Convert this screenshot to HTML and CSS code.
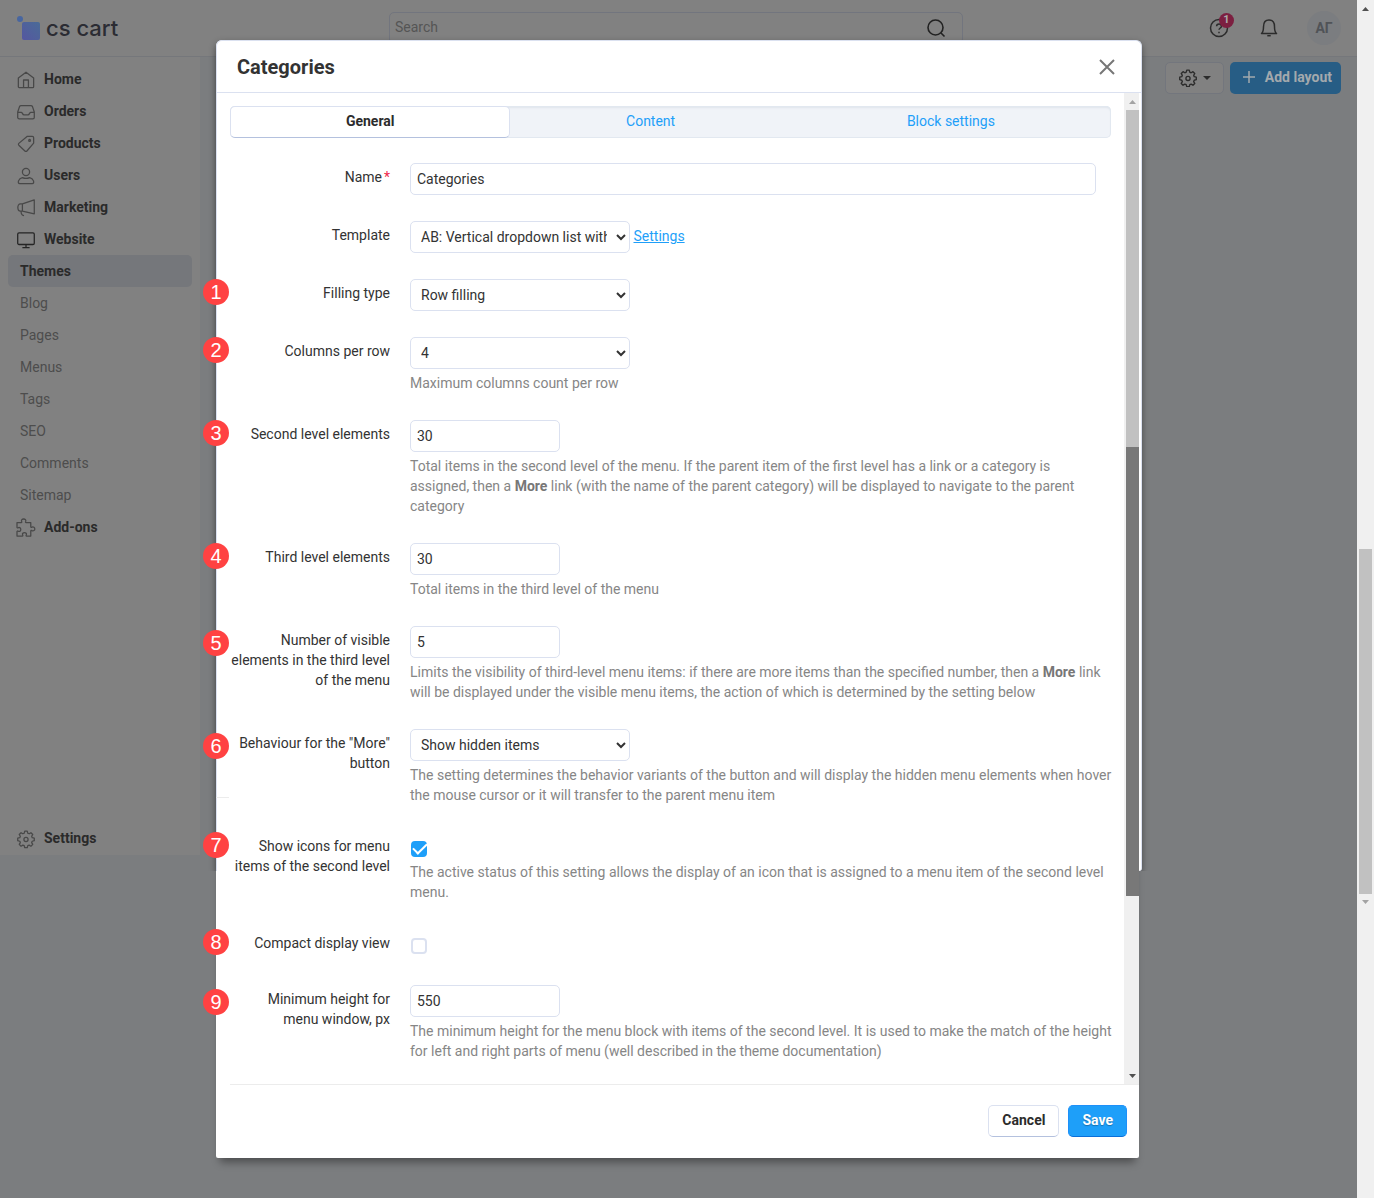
FILE: index.html
```html
<!DOCTYPE html>
<html lang="en">
<head>
    <meta charset="UTF-8">
    <meta name="viewport" content="width=device-width, initial-scale=1.0">
    <title>Categories</title>
    <link rel="stylesheet" href="styles.css">
</head>
<body>

    <div class="page">
        <header class="topbar">
            <a href="#" class="logo">
                <svg width="24" height="26" viewBox="0 0 24 26">
                    <defs>
                        <linearGradient id="logoFill" x1="1" y1="0" x2="0" y2="1">
                            <stop offset="0" stop-color="#4a6b97"/>
                            <stop offset="1" stop-color="#5557a0"/>
                        </linearGradient>
                    </defs>
                    <circle cx="3" cy="4" r="3" fill="#4866a0"/>
                    <rect x="5" y="7" width="18" height="18" rx="2" fill="url(#logoFill)"/>
                </svg>
                <span>cs cart</span>
            </a>
            <div class="search">
                <input type="text" placeholder="Search" aria-label="Search">
                <svg width="20" height="20" viewBox="0 0 20 20" fill="none" stroke="#222" stroke-width="1.6"><circle cx="9.500" cy="9.500" r="7.500"/><path d="M15 15l3.500 3.500"/></svg>
            </div>
            <div class="top-icons">
                <button class="icon-btn" aria-label="Help">
                    <svg width="20" height="20" viewBox="0 0 20 20" fill="none" stroke="#2c2c2c" stroke-width="1.500"><circle cx="10" cy="10" r="8.500"/><path d="M7.600 8.200c0-3 4.900-3 4.900 0 0 1.800-2.500 1.800-2.500 3.600M10 13.800v1.500"/></svg>
                    <span class="count">1</span>
                </button>
                <button class="icon-btn" aria-label="Notifications">
                    <svg width="20" height="20" viewBox="0 0 20 20" fill="none" stroke="#2c2c2c" stroke-width="1.500" stroke-linejoin="round"><path d="M2.500 15.500c1.700-1.300 2-3 2-6.800 0-4 2-6.700 5.500-6.700s5.500 2.700 5.500 6.700c0 3.800.3 5.500 2 6.800z"/><path d="M8.300 17.700h3.400"/></svg>
                </button>
                <button class="avatar">АГ</button>
            </div>
        </header>

        <div class="content">
            <nav class="sidebar">
                <a href="#" class="nav-item"><svg viewBox="0 0 20 20"><path d="M1.500 7.800L10 1.300l8.500 6.500v9.700a1 1 0 0 1-1 1h-15a1 1 0 0 1-1-1zM7.300 18.500V10h5.400v8.500"/></svg>Home</a>
                <a href="#" class="nav-item"><svg viewBox="0 0 20 20"><path d="M4.600 2.800h10.800c1 0 1.500.5 1.800 1.200L19.200 10v6a1.600 1.600 0 0 1-1.600 1.600H2.400A1.600 1.600 0 0 1 .8 16v-6l2-6c.3-.7.800-1.200 1.800-1.200zM.8 10.300h4c1.200 0 1.200 2.900 3 2.900h4.400c1.800 0 1.800-2.900 3-2.900h4"/></svg>Orders</a>
                <a href="#" class="nav-item"><svg viewBox="0 0 20 20"><path d="M11.500 1.500h5.500a1.500 1.500 0 0 1 1.500 1.500v6L11 17.800a1.500 1.500 0 0 1-2.200 0L2 11.300a1.500 1.500 0 0 1 0-2z"/><circle cx="14" cy="6" r="1"/></svg>Products</a>
                <a href="#" class="nav-item"><svg viewBox="0 0 20 20"><circle cx="10" cy="5.500" r="4"/><path d="M3 18.500c-3 0-1.500-6 3-6.700 2.500 1.200 5.500 1.200 8 0 4.500.7 6 6.700 3 6.700z"/></svg>Users</a>
                <a href="#" class="nav-item"><svg viewBox="0 0 20 20"><path d="M6 5.500L19.200 1v15.500L6 13.500zM6 5.500H3.800C0 5.500 0 13.500 3.800 13.500H6M4.500 13.500c0 3 .8 4.500 3.300 5M6 5.500v8"/></svg>Marketing</a>
                <a href="#" class="nav-item nav-open"><svg viewBox="0 0 20 20"><rect x=".8" y="2" width="18.400" height="13" rx="1.500"/><path d="M10 15v3M6 18.500h8"/></svg>Website</a>
                <a href="#" class="nav-sub active">Themes</a>
                <a href="#" class="nav-sub">Blog</a>
                <a href="#" class="nav-sub">Pages</a>
                <a href="#" class="nav-sub">Menus</a>
                <a href="#" class="nav-sub">Tags</a>
                <a href="#" class="nav-sub">SEO</a>
                <a href="#" class="nav-sub">Comments</a>
                <a href="#" class="nav-sub">Sitemap</a>
                <a href="#" class="nav-item"><svg viewBox="0 0 20 20"><path d="M0 4h4.700c.8 0 .8-.7.500-1.300C4.400 1 5.800 0 7.400 0s3 1 2.200 2.700C9.300 3.300 9.300 4 10.100 4h5.200v4.600c0 .8.700.9 1.300.5 1.700-.8 3.200.3 3.200 1.900s-1.500 2.700-3.200 1.900c-.6-.4-1.300-.3-1.300.5V19h-4.600c-.8 0-.7-.7-.4-1.300.8-1.500-.5-2.500-2-2.500s-2.800 1-2 2.500c.3.600.4 1.300-.4 1.300H0v-5c0-.8.700-.8 1.300-.4 1.700.8 2.900-.4 2.900-1.900S3 8.900 1.300 9.700C.7 10.100 0 10 0 9.200z"/></svg>Add-ons</a>
                <a href="#" class="nav-item nav-bottom"><svg viewBox="0 0 20 20"><use href="#gear"/></svg>Settings</a>
            </nav>
            <main class="toolbar">
                <button class="btn-gear" aria-label="Options">
                    <svg width="18" height="18" viewBox="0 0 20 20" fill="none" stroke="#2c2c2c" stroke-width="1.500" stroke-linejoin="round"><g id="gear"><path d="M8.600 1.300h2.800l.6 2.300 1.500.6 2-1.200 2 2-1.200 2 .6 1.500 2.300.6v2.800l-2.300.6-.6 1.500 1.200 2-2 2-2-1.200-1.500.6-.6 2.300H8.600L8 17.400l-1.500-.6-2 1.200-2-2 1.200-2-.6-1.500-2.300-.6V9.100l2.300-.6.6-1.500-1.200-2 2-2 2 1.200L8 3.600z"/><circle cx="10" cy="10.500" r="2.300"/></g></svg>
                    <svg width="8" height="4" viewBox="0 0 8 4"><path d="M0 0h8L4 4z" fill="#2c2c2c"/></svg>
                </button>
                <button class="btn-add">
                    <svg width="12" height="12" viewBox="0 0 12 12" stroke="#a3a9ad" stroke-width="1.500"><path d="M6 0v12M0 6h12"/></svg>
                    Add layout
                </button>
            </main>
        </div>
    </div>

    <!-- Page scrollbar -->
    <div class="scroll page-scroll">
        <svg class="arrow" viewBox="0 0 17 17"><path d="M5 11h7L8.500 7z" fill="#505050"/></svg>
        <span class="gap-before"></span>
        <span class="thumb"></span>
        <svg class="arrow" viewBox="0 0 17 17"><path d="M5 6h7l-3.500 4z" fill="#a3a3a3"/></svg>
        <span class="gap-after"></span>
    </div>

    <!-- Block settings dialog -->
    <form class="modal" role="dialog" aria-labelledby="modal-title">
        <div class="modal-header">
            <h1 id="modal-title">Categories</h1>
            <button type="button" class="close" aria-label="Close">
                <svg width="16" height="16" viewBox="0 0 16 16" stroke="#777" stroke-width="2"><path d="M1 1l14 14M15 1L1 15"/></svg>
            </button>
        </div>

        <div class="modal-main">
            <div class="modal-body">
                <nav class="tabs">
                    <a href="#" class="tab active">General</a>
                    <a href="#" class="tab">Content</a>
                    <a href="#" class="tab tab-wide">Block settings</a>
                </nav>

                <div class="row">
                    <label for="name">Name<span class="required">*</span></label>
                    <div class="control"><input type="text" id="name" class="wide" value="Categories"></div>
                </div>

                <div class="row">
                    <label for="template">Template</label>
                    <div class="control">
                        <select id="template"><option>AB: Vertical dropdown list with icons</option></select>
                        <a href="#" class="link">Settings</a>
                    </div>
                </div>

                <div class="row">
                    <span class="mark">1</span>
                    <label for="filling">Filling type</label>
                    <div class="control"><select id="filling"><option>Row filling</option></select></div>
                </div>

                <div class="row">
                    <span class="mark">2</span>
                    <label for="columns">Columns per row</label>
                    <div class="control">
                        <select id="columns"><option>4</option></select>
                        <p class="help">Maximum columns count per row</p>
                    </div>
                </div>

                <div class="row">
                    <span class="mark">3</span>
                    <label for="second">Second level elements</label>
                    <div class="control">
                        <input type="text" id="second" value="30">
                        <p class="help">Total items in the second level of the menu. If the parent item of the first level has a link or a category is assigned, then a <b>More</b> link (with the name of the parent category) will be displayed to navigate to the parent category</p>
                    </div>
                </div>

                <div class="row">
                    <span class="mark">4</span>
                    <label for="third">Third level elements</label>
                    <div class="control">
                        <input type="text" id="third" value="30">
                        <p class="help">Total items in the third level of the menu</p>
                    </div>
                </div>

                <div class="row tall">
                    <span class="mark">5</span>
                    <label for="visible">Number of visible elements in the third level of the menu</label>
                    <div class="control">
                        <input type="text" id="visible" value="5">
                        <p class="help">Limits the visibility of third-level menu items: if there are more items than the specified number, then a <b>More</b> link will be displayed under the visible menu items, the action of which is determined by the setting below</p>
                    </div>
                </div>

                <div class="row tall">
                    <span class="mark">6</span>
                    <label for="more">Behaviour for the "More" button</label>
                    <div class="control">
                        <select id="more"><option>Show hidden items</option></select>
                        <p class="help">The setting determines the behavior variants of the button and will display the hidden menu elements when hover the mouse cursor or it will transfer to the parent menu item</p>
                    </div>
                </div>

                <div class="row check-row">
                    <span class="mark">7</span>
                    <label for="icons">Show icons for menu items of the second level</label>
                    <div class="control">
                        <input type="checkbox" id="icons" checked>
                        <p class="help">The active status of this setting allows the display of an icon that is assigned to a menu item of the second level menu.</p>
                    </div>
                </div>

                <div class="row check-row">
                    <span class="mark">8</span>
                    <label for="compact">Compact display view</label>
                    <div class="control"><input type="checkbox" id="compact"></div>
                </div>

                <div class="row tall">
                    <span class="mark">9</span>
                    <label for="minheight">Minimum height for menu window, px</label>
                    <div class="control">
                        <input type="text" id="minheight" value="550">
                        <p class="help">The minimum height for the menu block with items of the second level. It is used to make the match of the height for left and right parts of menu (well described in the theme documentation)</p>
                    </div>
                </div>
            </div>

            <div class="scroll modal-scroll">
                <svg class="arrow" viewBox="0 0 17 17"><path d="M5 11h7L8.500 7z" fill="#a3a3a3"/></svg>
                <span class="thumb"></span>
                <span class="thumb thumb-dark"></span>
                <span class="gap-after"></span>
                <svg class="arrow" viewBox="0 0 17 17"><path d="M5 7h7l-3.500 4z" fill="#505050"/></svg>
            </div>
        </div>

        <div class="modal-footer">
            <button type="button" class="btn">Cancel</button>
            <button type="submit" class="btn btn-primary">Save</button>
        </div>
    </form>

</body>
</html>
```
FILE: styles.css
```css
/* Basic Reset */
* {
    margin: 0;
    padding: 0;
    box-sizing: border-box;
}

body {
    position: relative;
    display: flex;
    min-height: 100vh;
    font-family: Roboto, sans-serif;
    font-size: 14px;
    line-height: 20px;
    color: #333;
    background: #7b7d7f;
}

a {
    text-decoration: none;
    color: inherit;
}

button, input, select {
    font: inherit;
    color: inherit;
}

.page {
    flex: 1;
    min-width: 0;
}

/* Top bar */
.topbar {
    display: flex;
    align-items: center;
    height: 57px;
    padding: 0 16px 0 17px;
    background: #818181;
    border-bottom: 1px solid #75777b;
}

.logo {
    display: flex;
    align-items: center;
    gap: 5px;
    width: 372px;
    font-family: Inter, sans-serif;
    font-size: 22px;
    font-weight: 500;
    color: #2b2c33;
}

.search {
    display: flex;
    align-items: center;
    flex: 0 1 574px;
    height: 32px;
    padding: 0 16px 0 5px;
    border: 1px solid #72757e;
    border-radius: 5px;
}

    .search input {
        flex: 1;
        padding-bottom: 2px;
        border: 0;
        background: none;
        outline: none;
    }

    .search input::placeholder {
        color: #555;
    }

.top-icons {
    display: flex;
    align-items: center;
    gap: 30px;
    margin-left: auto;
}

.icon-btn {
    position: relative;
    display: flex;
    border: 0;
    background: none;
}

.count {
    position: absolute;
    top: -5px;
    left: 10px;
    width: 15px;
    height: 15px;
    border-radius: 50%;
    background: #7c1f40;
    color: #aaa;
    font-size: 11px;
    font-weight: 700;
    line-height: 14px;
}

.avatar {
    width: 34px;
    height: 34px;
    margin-left: -2px;
    border: 0;
    border-radius: 50%;
    background: #7b7d80;
    color: #505357;
    font-weight: 700;
}

/* Sidebar */
.content {
    display: flex;
    align-items: flex-start;
}

.sidebar {
    display: flex;
    flex-direction: column;
    width: 200px;
    padding: 6px 8px 1px;
    background: #818181;
}

.nav-item {
    display: flex;
    align-items: center;
    gap: 9px;
    height: 32px;
    padding-left: 9px;
    font-weight: 700;
    color: #2a2a2a;
}

    .nav-item svg {
        width: 18px;
        height: 18px;
        overflow: visible;
        fill: none;
        stroke: #484848;
        stroke-width: 1.4;
        stroke-linejoin: round;
        margin-top: 2px;
    }

.nav-item.nav-open svg {
    stroke: #252525;
}

.nav-sub {
    height: 32px;
    padding: 6px 12px;
    border-radius: 5px;
    color: #4d4d4d;
}

    .nav-sub.active {
        background: #75777b;
        color: #2a2a2a;
        font-weight: 700;
    }

.nav-bottom {
    margin-top: 279px;
}

/* Toolbar */
.toolbar {
    display: flex;
    flex: 1;
    justify-content: flex-end;
    gap: 6px;
    padding: 5px 16px;
}

.btn-gear, .btn-add {
    display: flex;
    align-items: center;
    height: 32px;
    border-radius: 5px;
}

.btn-gear {
    gap: 6px;
    padding: 0 12px 0 13px;
    border: 1px solid #73767d;
    background: #818181;
}

.btn-add {
    gap: 10px;
    padding: 0 9px 2px 13px;
    border: 0;
    background: #275d85;
    color: #a3a9ad;
    font-weight: 700;
}

/* Scrollbars */
.scroll {
    display: flex;
    flex-direction: column;
    background: #f0f0f0;
}

    .scroll .arrow {
        width: 17px;
        height: 17px;
    }

.thumb {
    margin: 0 2px;
    background: #c1c1c1;
}

.page-scroll {
    width: 17px;
}

    .page-scroll .gap-before {
        flex: 532;
    }

    .page-scroll .thumb {
        flex: 345;
    }

    .page-scroll .gap-after {
        flex: 287;
    }

.modal-scroll {
    width: 15px;
}

    .modal-scroll .thumb {
        flex: 337;
        margin: 0 0 0 2px;
    }

    .modal-scroll .thumb-dark {
        flex: 449;
        background: #787878;
    }

    .modal-scroll .gap-after {
        flex: 171;
    }

/* Modal */
.modal {
    position: absolute;
    z-index: 1;
    top: 40px;
    left: 216px;
    right: 235px;
    border-radius: 6px 6px 2px 2px;
    background: #fff;
    box-shadow: 0 8px 8px -4px rgba(0, 0, 0, 0.4);
}

    /* Raised panel edge behind the upper part */
    .modal::before {
        content: "";
        position: absolute;
        z-index: -1;
        top: 0;
        left: 0;
        right: -3px;
        height: 830px;
        border: 1px solid #dbe1f0;
        border-bottom: 0;
        border-radius: 6px 6px 3px 0;
        background: #fff;
        box-shadow: 0 3px 7px rgba(0, 0, 0, 0.4);
        clip-path: inset(-10px -12px 0 -12px);
    }

    .modal::after {
        content: "";
        position: absolute;
        top: 757px;
        left: 0;
        width: 13px;
        height: 1px;
        background: #ececec;
    }

.modal-header {
    display: flex;
    align-items: center;
    justify-content: space-between;
    height: 53px;
    margin-right: -3px;
    padding: 2px 27px 0 21px;
    border-bottom: 1px solid #dbe1f0;
}

    .modal-header h1 {
        font-size: 20px;
        font-weight: 700;
        line-height: 24px;
    }

.close {
    display: flex;
    border: 0;
    background: none;
}

.modal-main {
    display: flex;
}

.modal-body {
    flex: 1;
    min-width: 0;
    padding: 13px 13px 22px 14px;
}

.tabs {
    display: flex;
    height: 32px;
    margin-bottom: 25px;
    border-radius: 5px;
    background: #f0f3f8;
    box-shadow: inset 0 0 0 1px #e2e8f0, inset 0 2px 2px #e0e5ec;
}

.tab {
    flex: 7;
    padding: 4px 0;
    border: 1px solid transparent;
    text-align: center;
    color: #1e9ff9;
}

    .tab.active {
        border-color: #dbe1f0;
        border-bottom-color: #b4c1de;
        border-radius: 5px;
        background: #fff;
        color: #2c2c2c;
        font-weight: 700;
    }

.tab-wide {
    flex: 8;
}

/* Form rows */
.row {
    position: relative;
    display: flex;
    gap: 20px;
    margin-bottom: 26px;
}

    .row:last-child {
        margin-bottom: 0;
    }

    .row label {
        width: 160px;
        padding-top: 4px;
        text-align: right;
    }

.required {
    margin-left: 2px;
    color: #f0294c;
}

.control {
    flex: 1;
    min-width: 0;
}

    .control input[type="text"], .control select {
        display: inline-block;
        vertical-align: top;
        height: 32px;
        padding: 0 6px;
        border: 1px solid #dbe1f0;
        border-radius: 5px;
        background: #fff;
    }

    .control input[type="text"] {
        width: 150px;
    }

    .control input.wide {
        width: calc(100% - 15px);
    }

    .control select {
        width: 220px;
    }

.link {
    display: inline-block;
    padding-top: 5px;
    color: #1e9ff9;
    text-decoration: underline;
}

.help {
    margin-right: -1px;
    padding: 4px 0 1px;
    color: #868686;
}

    .help b {
        color: #777;
    }

.check-row .help {
    padding-top: 0;
}

.control input[type="checkbox"] {
    display: block;
    appearance: none;
    width: 16px;
    height: 16px;
    margin: 9px 1px 5px;
    border: 2px solid #dbe1f0;
    border-radius: 4px;
    background: #fff;
}

    .control input[type="checkbox"]:checked {
        border-color: #1e9ff9;
        background: #1e9ff9;
    }

    .control input[type="checkbox"]:checked::before {
        content: "";
        display: block;
        width: 12px;
        height: 6px;
        border: solid #fff;
        border-width: 0 0 2px 2px;
        transform: rotate(-45deg);
    }

/* Numbered marks on the left edge */
.mark {
    position: absolute;
    top: 0;
    left: -27px;
    width: 26px;
    height: 26px;
    border-radius: 50%;
    background: #ff4242;
    color: #fff;
    font-family: "Liberation Sans", sans-serif;
    font-size: 20px;
    line-height: 26px;
    text-align: center;
}

.tall .mark {
    top: 4px;
}

/* Footer */
.modal-footer {
    display: flex;
    justify-content: flex-end;
    gap: 9px;
    margin-left: 14px;
    padding: 20px 12px 21px;
    border-top: 1px solid #ececec;
}

.btn {
    height: 32px;
    padding: 0 13px 2px;
    border: 1px solid #dbe1f0;
    border-bottom-color: #b4c1de;
    border-radius: 5px;
    background: #fff;
    color: #2c2c2c;
    font-weight: 700;
}

.btn-primary {
    border-color: #1e90f9;
    border-bottom-color: #0a6fd8;
    background: #1e9ff9;
    color: #fff;
    text-shadow: 0 1px 1px rgba(0, 0, 0, 0.3);
}
```
